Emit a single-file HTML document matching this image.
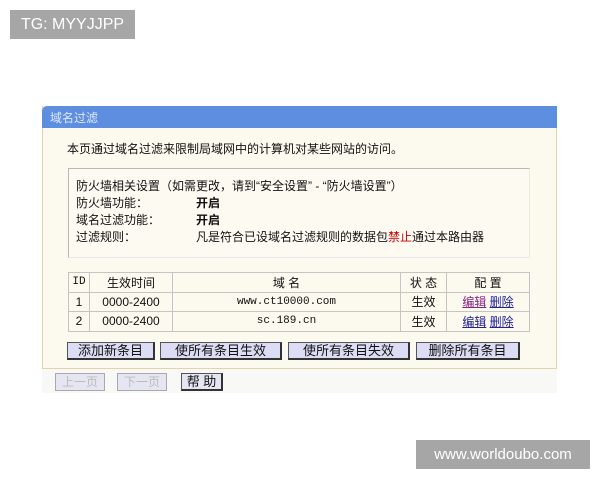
<!DOCTYPE html>
<html><head><meta charset="utf-8"><style>
*{margin:0;padding:0;box-sizing:border-box}
body{width:600px;height:480px;background:#fff;position:relative;overflow:hidden;font-family:"Liberation Sans","Noto Sans CJK SC",sans-serif;font-size:12px;color:#111}
.abs{position:absolute}
.tag{background:#a6a6a6;color:#fff;font-size:16px;display:flex;align-items:center;justify-content:center}
.panel{left:42px;top:106px;width:515px;height:287px;background:#fcf9ee;border:1px solid #e2d3ad;border-top:none}
.hdr{left:42px;top:106px;width:515px;height:22px;background:#5e8ee0;color:#dfe9fb;font-size:12px;padding:3px 0 0 8px;border-radius:5px 0 0 0}
.box{left:68px;top:168px;width:462px;height:90px;border:1px solid #b8b8b8;border-right-color:#e8e8e8;border-bottom-color:#e8e8e8;background:#fdfaf2}
table{position:absolute;left:68px;top:272px;width:462px;border-collapse:collapse;font-size:12px}
td{border:1px solid #c4c4c4;height:19.5px;text-align:center;padding:0}
.mono{font-family:"Liberation Mono","Noto Sans CJK SC",monospace;font-size:11px}
.btn{background:#dcdcf4;border:1px solid #555;border-right:2px solid #333;border-bottom:2px solid #333;font-size:13px;text-align:center;line-height:15px}
.fb{background:#e6e6f2;border:1px solid #aaa;color:#bbb;font-size:12px;text-align:center;line-height:16px}
a{color:#222299;text-decoration:underline}
</style></head><body>
<div class="abs tag" style="left:10px;top:10px;width:125px;height:29px">TG: MYYJJPP</div>
<div class="abs panel"></div>
<div class="abs hdr">域名过滤</div>
<div class="abs" style="left:67px;top:140px;font-size:12px">本页通过域名过滤来限制局域网中的计算机对某些网站的访问。</div>
<div class="abs box"></div>
<div class="abs" style="left:76px;top:178px;line-height:17px">防火墙相关设置（如需更改，请到“安全设置” - “防火墙设置”）<br>防火墙功能：<br>域名过滤功能：<br>过滤规则：</div>
<div class="abs" style="left:196px;top:195px;line-height:17px"><b>开启</b><br><b>开启</b><br>凡是符合已设域名过滤规则的数据包<span style="color:#c00">禁止</span>通过本路由器</div>
<table>
<tr><td style="width:21px" class="mono">ID</td><td style="width:83px">生效时间</td><td style="width:228px">域 名</td><td style="width:46px">状 态</td><td>配 置</td></tr>
<tr><td>1</td><td>0000-2400</td><td class="mono">www.ct10000.com</td><td>生效</td><td><a style="color:#882288">编辑</a> <a>删除</a></td></tr>
<tr><td>2</td><td>0000-2400</td><td class="mono">sc.189.cn</td><td>生效</td><td><a>编辑</a> <a>删除</a></td></tr>
</table>
<div class="abs btn" style="left:67px;top:342px;width:88px;height:18px">添加新条目</div>
<div class="abs btn" style="left:160px;top:342px;width:122px;height:18px">使所有条目生效</div>
<div class="abs btn" style="left:288px;top:342px;width:122px;height:18px">使所有条目失效</div>
<div class="abs btn" style="left:416px;top:342px;width:104px;height:18px">删除所有条目</div>
<div class="abs" style="left:42px;top:368px;width:515px;height:1px;background:#e2d3ad"></div>
<div class="abs" style="left:42px;top:369px;width:515px;height:24px;background:#f8f8f6"></div>
<div class="abs fb" style="left:55px;top:373px;width:50px;height:18px">上一页</div>
<div class="abs fb" style="left:117px;top:373px;width:50px;height:18px">下一页</div>
<div class="abs btn" style="left:181px;top:373px;width:42px;height:18px;background:#e6e6f2">帮 助</div>
<div class="abs tag" style="left:416px;top:440px;width:174px;height:29px;font-size:15px">www.worldoubo.com</div>
</body></html>
